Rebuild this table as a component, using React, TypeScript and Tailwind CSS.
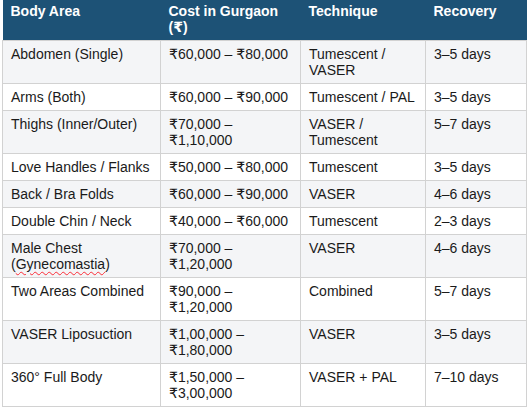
import React from 'react';

type Row = {
  area: React.ReactNode[];
  cost: string[];
  technique: string[];
  recovery: string;
};

const rows: Row[] = [
  { area: ['Abdomen (Single)'], cost: ['₹60,000 – ₹80,000'], technique: ['Tumescent /', 'VASER'], recovery: '3–5 days' },
  { area: ['Arms (Both)'], cost: ['₹60,000 – ₹90,000'], technique: ['Tumescent / PAL'], recovery: '3–5 days' },
  { area: ['Thighs (Inner/Outer)'], cost: ['₹70,000 –', '₹1,10,000'], technique: ['VASER /', 'Tumescent'], recovery: '5–7 days' },
  { area: ['Love Handles / Flanks'], cost: ['₹50,000 – ₹80,000'], technique: ['Tumescent'], recovery: '3–5 days' },
  { area: ['Back / Bra Folds'], cost: ['₹60,000 – ₹90,000'], technique: ['VASER'], recovery: '4–6 days' },
  { area: ['Double Chin / Neck'], cost: ['₹40,000 – ₹60,000'], technique: ['Tumescent'], recovery: '2–3 days' },
  {
    area: [
      'Male Chest',
      <>
        (<span className="underline decoration-wavy decoration-red-500 decoration-1 underline-offset-2">Gynecomastia</span>)
      </>,
    ],
    cost: ['₹70,000 –', '₹1,20,000'],
    technique: ['VASER'],
    recovery: '4–6 days',
  },
  { area: ['Two Areas Combined'], cost: ['₹90,000 –', '₹1,20,000'], technique: ['Combined'], recovery: '5–7 days' },
  { area: ['VASER Liposuction'], cost: ['₹1,00,000 –', '₹1,80,000'], technique: ['VASER'], recovery: '3–5 days' },
  { area: ['360° Full Body'], cost: ['₹1,50,000 –', '₹3,00,000'], technique: ['VASER + PAL'], recovery: '7–10 days' },
];

function Lines({ items }: { items: React.ReactNode[] }) {
  return (
    <>
      {items.map((t, i) => (
        <div key={i} className="h-4 whitespace-nowrap">{t}</div>
      ))}
    </>
  );
}

export default function App() {
  const td = 'border border-[#d2d2d2] px-2 pt-[5px] pb-[5px] align-top';
  return (
    <div className="w-[530px] h-[411px] bg-white overflow-hidden" style={{ fontFamily: '"Liberation Sans", Arial, "DejaVu Sans", sans-serif' }}>
      <table className="ml-[2px] w-[524px] table-fixed border-collapse text-[14px] leading-4 text-[#1a1a1a]">
        <colgroup>
          <col className="w-[158px]" />
          <col className="w-[140px]" />
          <col className="w-[125px]" />
          <col className="w-[101px]" />
        </colgroup>
        <thead>
          <tr className="bg-[#1d5276] text-white font-bold text-left">
            <th className="px-2 pt-[3px] pb-[5px] align-top font-bold">Body Area</th>
            <th className="px-2 pt-[3px] pb-[5px] align-top font-bold">
              <div className="h-4">Cost in Gurgaon</div>
              <div className="h-4">(₹)</div>
            </th>
            <th className="px-2 pt-[3px] pb-[5px] align-top font-bold">Technique</th>
            <th className="px-2 pt-[3px] pb-[5px] align-top font-bold">Recovery</th>
          </tr>
        </thead>
        <tbody>
          {rows.map((r, i) => (
            <tr key={i} className={i % 2 === 0 ? 'bg-[#f4f5f7]' : 'bg-white'}>
              <td className={td}><Lines items={r.area} /></td>
              <td className={td}><Lines items={r.cost} /></td>
              <td className={td}><Lines items={r.technique} /></td>
              <td className={td}><div className="h-4 whitespace-nowrap">{r.recovery}</div></td>
            </tr>
          ))}
        </tbody>
      </table>
    </div>
  );
}
